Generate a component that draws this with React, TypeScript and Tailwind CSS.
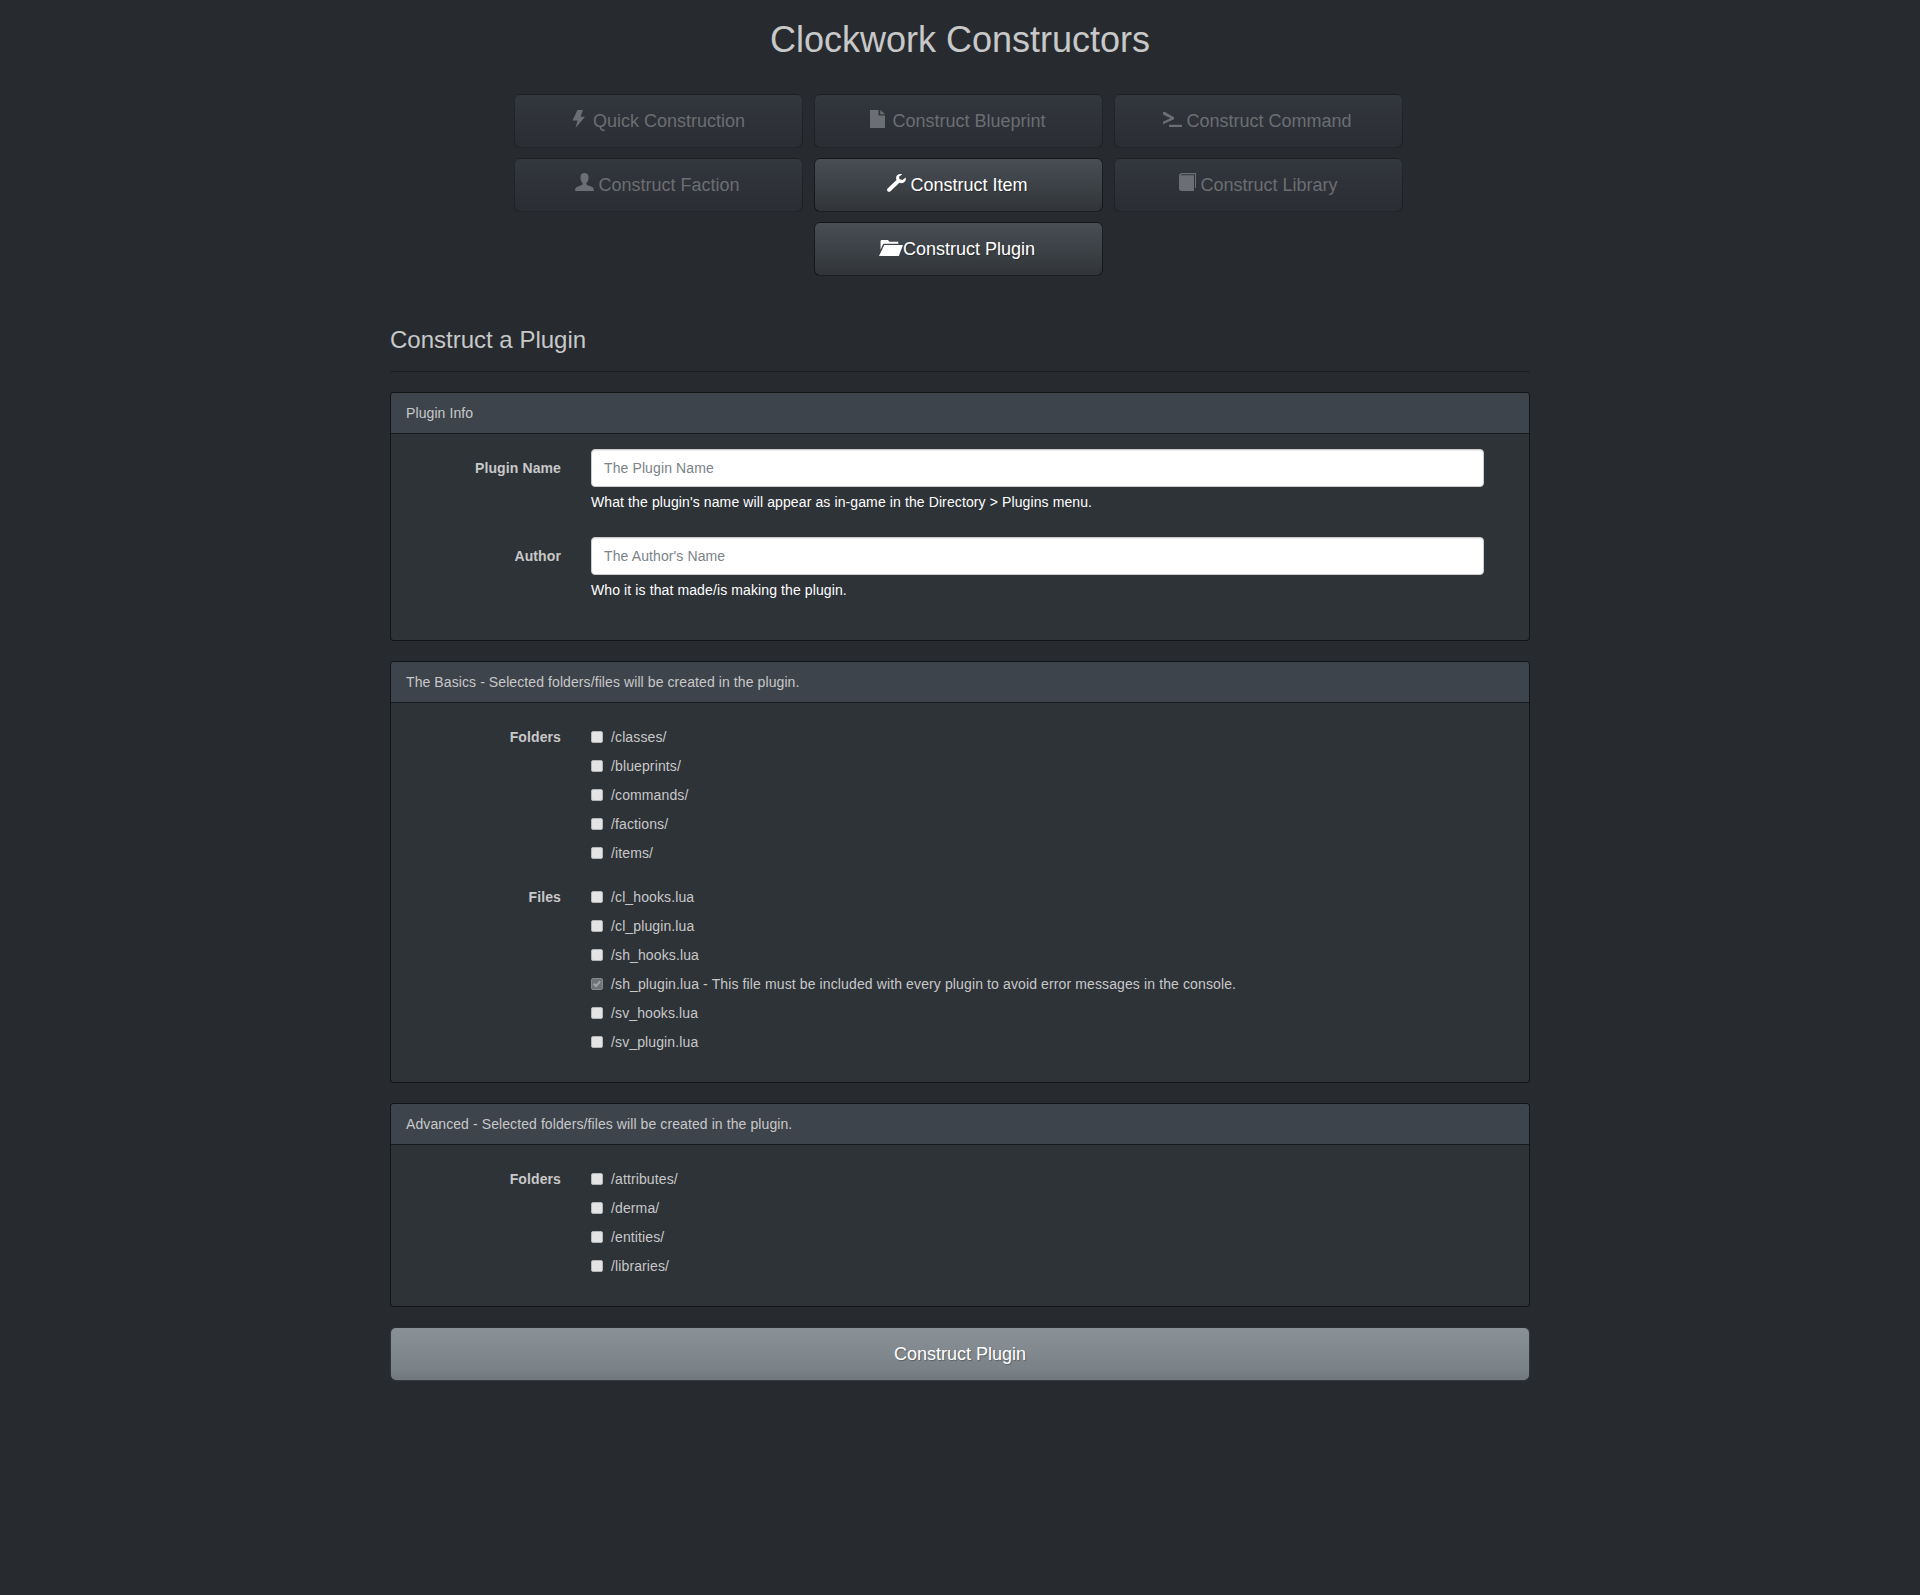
const font = { fontFamily: '"Liberation Sans", Arial, sans-serif' };

const FlashIcon = () => (
    <svg width="13" height="18" viewBox="0 0 13 19" preserveAspectRatio="none" className="inline-block fill-current align-[-1px] ml-[2px] mr-[8px]">
        <path d="M5.500 0H11L8.500 7H13L3.500 19 5.500 11H.5z" />
    </svg>
);

const FileIcon = () => (
    <svg width="15" height="18" viewBox="0 0 14 18" preserveAspectRatio="none" className="inline-block fill-current align-[-1px] ml-[1px] mr-[7px]">
        <path d="M0 0h8v5.500h6V18H0zM9.500 0 14 4.200H9.500z" />
    </svg>
);

const ConsoleIcon = () => (
    <svg width="19" height="15" viewBox="0 0 19 16" preserveAspectRatio="none" className="inline-block fill-current align-[0px] mr-[4px]">
        <path d="M0 0h2l9 5.500v2.200L0 13v-2.600L7.400 6.600 0 2.600zM6 13.500h13V16H6z" />
    </svg>
);

const UserIcon = () => (
    <svg width="19" height="18" viewBox="0 0 19 19" preserveAspectRatio="none" className="inline-block fill-current align-[0px] mr-[4px]">
        <path d="M9.500 0C12.300 0 13.600 2 13.600 4.800c0 2.600-1 4.600-2 5.800-.5.700-.4 1.600.5 2l4.600 2c1.300.6 2.100 1.700 2.300 4.400H0c.2-2.700 1-3.800 2.300-4.400l4.600-2c.9-.4 1-1.300.5-2-1-1.200-2-3.200-2-5.800C5.400 2 6.700 0 9.500 0z" />
    </svg>
);

const WrenchIcon = () => (
    <svg width="19" height="18" viewBox="0 0 19 19" preserveAspectRatio="none" className="inline-block fill-current align-[-1px] mr-[4px]">
        <path d="M18.700 3.600 15.500 6.400 12.600 5.600 12 2.800 15.200.2C13-.5 10.600.3 9.600 2.200c-.7 1.300-.7 2.800-.1 4.100L.6 15.200c-.8.800-.8 2 0 2.900.8.800 2.100.8 2.900 0l8.900-8.800c1.400.6 3.100.5 4.400-.3 1.700-1.100 2.400-3.300 1.900-5.400z" />
    </svg>
);

const BookIcon = () => (
    <svg width="17" height="18" viewBox="0 0 17 18" className="inline-block fill-current align-[0px] ml-[2px] mr-[4px]">
        <path d="M3 0h14v15h-1V1.200H3.400C2.500 1.200 2 1.700 1.800 2.300H15v15.700H2.500C1 18 0 17 0 15.500V3.200C0 1.200 1.200 0 3 0z" />
    </svg>
);

const FolderOpenIcon = () => (
    <svg width="24" height="16" viewBox="0 0 23 18" preserveAspectRatio="none" className="inline-block fill-current align-[-1px] ml-[-1px]">
        <path d="M3 0h5.500l1.500 2h8.500v2.200H5.500c-1 0-1.600.5-2 1.500L1.500 11V1.500C1.500.6 2.100 0 3 0zM5 5.500h18L19 18H0z" />
    </svg>
);

const NavButton = ({ icon, label, active }: { icon: React.ReactNode; label: string; active?: boolean }) => (
    <div
        className={
            active
                ? 'h-[54px] pr-[2px] rounded-[6px] border border-[rgba(0,0,0,0.6)] flex items-center justify-center text-[18px] text-white bg-gradient-to-b from-[#484e55] via-[#3a3f44] via-60% to-[#313539] [text-shadow:1px_1px_1px_rgba(0,0,0,0.3)]'
                : 'h-[54px] pr-[2px] rounded-[6px] border border-[rgba(0,0,0,0.3)] flex items-center justify-center text-[18px] text-[#6b6e72] bg-gradient-to-b from-[#33373e] to-[#2a2d32]'
        }
    >
        <span className="whitespace-pre">
            {icon}
            {label}
        </span>
    </div>
);

const Panel = ({ title, children, bodyClass }: { title: string; children: React.ReactNode; bodyClass: string }) => (
    <div className="rounded-[4px] border border-[rgba(0,0,0,0.6)] bg-[#2e3338]">
        <div className="h-[41px] pl-[15px] flex items-center bg-[#3e444c] border-b border-[rgba(0,0,0,0.6)] rounded-t-[3px] text-[14px] tracking-[0.09px] text-[#c8c8c8]">
            {title}
        </div>
        <div className={bodyClass}>{children}</div>
    </div>
);

const TextRow = ({ label, placeholder, help }: { label: string; placeholder: string; help: string }) => (
    <div className="flex gap-[30px] pr-[45px] mb-[15px]">
        <div className="w-[170px] shrink-0 pt-[9px] text-right text-[14px] leading-[20px] tracking-[0.11px] font-bold text-[#c8c8c8]">{label}</div>
        <div className="flex-1">
            <input
                readOnly
                placeholder={placeholder}
                className="block w-full h-[38px] px-[12px] rounded-[4px] bg-white border border-[#cccccc] text-[14px] tracking-[0.11px] text-[#272b30] placeholder:text-[#7a8288] outline-none shadow-[inset_0_1px_1px_rgba(0,0,0,0.075)]"
            />
            <p className="mt-[5px] mb-[10px] text-[14px] leading-[20px] tracking-[0.11px] text-white">{help}</p>
        </div>
    </div>
);

const CheckBox = ({ checked }: { checked?: boolean }) =>
    checked ? (
        <span className="block w-[12px] h-[12px] rounded-[2px] bg-[#6f7377] border border-[#85888b] text-[#a3a5a7]">
            <svg viewBox="0 0 10 10" className="w-[10px] h-[10px] fill-current">
                <path d="M1 5.500 2.500 4 4 5.500 7.800 1.500 9 3 4 8.500z" />
            </svg>
        </span>
    ) : (
        <span className="block w-[12px] h-[12px] rounded-[2px] bg-[#e4e4e4] border border-[#b5b5b5]" />
    );

const CheckGroup = ({ label, items, className }: { label: string; items: { text: string; checked?: boolean }[]; className?: string }) => (
    <div className={`flex gap-[30px] ${className ?? ''}`}>
        <div className="w-[170px] shrink-0 text-right text-[14px] leading-[20px] tracking-[0.11px] font-bold text-[#c8c8c8]">{label}</div>
        <div className="flex flex-col gap-[9px]">
            {items.map((item) => (
                <div key={item.text} className="flex items-center gap-[8px] h-[20px] text-[14px] leading-[20px] tracking-[0.12px] text-[#c8c8c8]">
                    <CheckBox checked={item.checked} />
                    <span>{item.text}</span>
                </div>
            ))}
        </div>
    </div>
);

const App = () => {
    return (
        <div style={font} className="min-h-[1595px] bg-[#272b30] text-[#c8c8c8]">
            <div className="w-[1140px] mx-auto">
                <h1 className="pt-[20px] h-[94px] text-center text-[36px] leading-[40px] font-normal">Clockwork Constructors</h1>

                <div className="ml-[124px] w-[889px] grid grid-cols-3 gap-x-[11px] gap-y-[10px]">
                    <NavButton icon={<FlashIcon />} label="Quick Construction" />
                    <NavButton icon={<FileIcon />} label="Construct Blueprint" />
                    <NavButton icon={<ConsoleIcon />} label="Construct Command" />
                    <NavButton icon={<UserIcon />} label="Construct Faction" />
                    <NavButton icon={<WrenchIcon />} label="Construct Item" active />
                    <NavButton icon={<BookIcon />} label="Construct Library" />
                    <div />
                    <NavButton icon={<FolderOpenIcon />} label="Construct Plugin" active />
                </div>

                <h2 className="mt-[46px] text-[24px] leading-[36px] font-normal">Construct a Plugin</h2>
                <hr className="mt-[13px] mb-[20px] border-t border-[#1c1e22]" />

                <div className="flex flex-col gap-[20px]">
                    <Panel title="Plugin Info" bodyClass="pt-[15px]">
                        <TextRow label="Plugin Name" placeholder="The Plugin Name" help="What the plugin's name will appear as in-game in the Directory > Plugins menu." />
                        <TextRow label="Author" placeholder="The Author's Name" help="Who it is that made/is making the plugin." />
                        <div className="h-[15px]" />
                    </Panel>

                    <Panel title="The Basics - Selected folders/files will be created in the plugin." bodyClass="pt-[24px] pb-[30px]">
                        <CheckGroup
                            label="Folders"
                            items={[{ text: '/classes/' }, { text: '/blueprints/' }, { text: '/commands/' }, { text: '/factions/' }, { text: '/items/' }]}
                            className="mb-[24px]"
                        />
                        <CheckGroup
                            label="Files"
                            items={[
                                { text: '/cl_hooks.lua' },
                                { text: '/cl_plugin.lua' },
                                { text: '/sh_hooks.lua' },
                                { text: '/sh_plugin.lua - This file must be included with every plugin to avoid error messages in the console.', checked: true },
                                { text: '/sv_hooks.lua' },
                                { text: '/sv_plugin.lua' },
                            ]}
                        />
                    </Panel>

                    <Panel title="Advanced - Selected folders/files will be created in the plugin." bodyClass="pt-[24px] pb-[30px]">
                        <CheckGroup
                            label="Folders"
                            items={[{ text: '/attributes/' }, { text: '/derma/' }, { text: '/entities/' }, { text: '/libraries/' }]}
                        />
                    </Panel>
                </div>

                <div className="mt-[20px] h-[54px] rounded-[6px] border border-[rgba(0,0,0,0.6)] flex items-center justify-center text-[18px] text-white bg-gradient-to-b from-[#8a9196] via-[#7a8288] via-80% to-[#70787d] [text-shadow:1px_1px_1px_rgba(0,0,0,0.3)]">
                    Construct Plugin
                </div>
            </div>
        </div>
    );
};

export default App;
